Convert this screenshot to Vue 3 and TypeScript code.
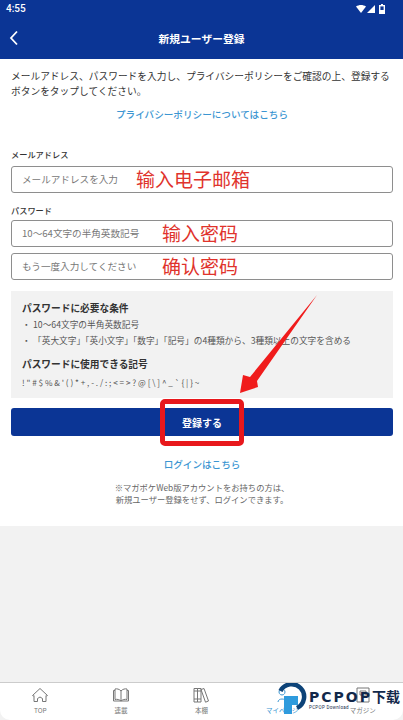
<script setup lang="ts">
interface Tab {
  label: string;
  active?: boolean;
}

const tabs: Tab[] = [
  { label: 'TOP' },
  { label: '連載' },
  { label: '本棚' },
  { label: 'マイページ', active: true },
  { label: 'マガジン' },
];

const fields = [
  { placeholder: '10〜64文字の半角英数記号', note: '输入密码' },
  { placeholder: 'もう一度入力してください', note: '确认密码' },
];
</script>

<template>
  <div class="phone">
    <header class="head">
      <div class="status">
        <span>4:55</span>
        <span class="status-icons">
          <svg width="10" height="8" viewBox="0 0 10 8"><path d="M0 1.500C3 -.5 7 -.5 10 1.500L5 8Z" fill="#fff" /></svg>
          <svg width="8" height="8" viewBox="0 0 8 8"><path d="M8 0V8H0Z" fill="#fff" /></svg>
          <svg class="battery" width="6" height="10" viewBox="0 0 6 10"><path d="M2 0H4V1H6V10H0V1H2Z" fill="#fff" /><rect x="1.400" y="2.400" width="3.200" height="3.600" fill="#0b3595" /></svg>
        </span>
      </div>
      <div class="nav">
        <svg class="back" width="10" height="16" viewBox="0 0 10 16"><path d="M8 1.500 2 8l6 6.500" fill="none" stroke="#fff" stroke-width="1.800" /></svg>
        <span class="title">新規ユーザー登録</span>
      </div>
    </header>

    <main class="form">
      <p class="intro">メールアドレス、パスワードを入力し、プライバシーポリシーをご確認の上、登録するボタンをタップしてください。</p>
      <a class="link policy">プライバシーポリシーについてはこちら</a>

      <label class="label">メールアドレス</label>
      <div class="field email">
        <span class="placeholder first">メールアドレスを入力</span>
        <span class="note">输入电子邮箱</span>
      </div>

      <label class="label second">パスワード</label>
      <div class="stack">
        <div v-for="f in fields" :key="f.note" class="field">
          <span class="placeholder wide">{{ f.placeholder }}</span>
          <span class="note">{{ f.note }}</span>
        </div>
      </div>

      <section class="rules">
        <h3>パスワードに必要な条件</h3>
        <ul>
          <li>10〜64文字の半角英数記号</li>
          <li>「英大文字」「英小文字」「数字」「記号」の4種類から、3種類以上の文字を含める</li>
        </ul>
        <h3 class="symbols-title">パスワードに使用できる記号</h3>
        <p class="symbols">! " # $ % &amp; ' ( ) * + , - . / : ; &lt; = &gt; ? @ [ \ ] ^ _ ` { | } ~</p>
      </section>

      <div class="submit-wrap">
        <button class="submit">登録する</button>
        <span class="mark"></span>
        <svg class="arrow" width="90" height="110" viewBox="0 0 90 110"><path d="M82 5 22 91l1 6L5 103 8 85l7 2Z" fill="#f01c1c" /></svg>
      </div>

      <a class="link login">ログインはこちら</a>
      <p class="notice">※マガポケWeb版アカウントをお持ちの方は、<br />新規ユーザー登録をせず、ログインできます。</p>
    </main>

    <div class="blank"></div>

    <nav class="tabs">
      <div v-for="(t, i) in tabs" :key="t.label" class="tab" :class="{ active: t.active }">
        <svg width="18" height="18" viewBox="0 0 18 18" fill="none" stroke="currentColor" stroke-width="1">
          <path v-if="i === 0" d="M1.500 9.500 9 2.500l7.500 7c-.5.5-1 .5-1.500 0v6h-3.500v-3q-2.500-3-5 0v3H3v-6c-.5.5-1 .5-1.500 0Z" />
          <path v-else-if="i === 1" d="M9 5C7.500 3 4.500 2.500 3 3v10.500c2 -.5 4.500 0 6 1.500 1.500-1.500 4-2 6-1.500V3C13.500 2.500 10.500 3 9 5Zm0 0v10M3 4.500H1.500V15h15V4.500H15" />
          <path v-else-if="i === 2" d="M2 2.500h3.500V16H2zM5.500 2.500H9V16H5.500zM9 3.500l3-1 4.500 12.500-3 1.200zM2 5h7M2 13h7" />
          <path v-else-if="i === 3" d="M5 16c0-4 8-4 8 0M9 3a3 3 0 1 0 .01 0" />
          <path v-else d="M3 2h12v14H3zM6 5h6v4H6z" />
        </svg>
        <span class="tab-label">{{ t.label }}</span>
      </div>
    </nav>

    <div class="watermark">
      <svg width="32" height="34" viewBox="0 0 32 34">
        <path d="M5.500 8A12.500 12.500 0 1 1 22 25" fill="none" stroke="#0d4378" stroke-width="4.500" />
        <rect x="9" y="13" width="14" height="9" fill="#2f9bdd" />
        <rect x="9" y="21" width="8" height="10" fill="#2f9bdd" />
      </svg>
      <div class="wm-text">
        <div class="wm-main"><span class="wm-latin">PCPOP</span>下载</div>
        <div class="wm-sub">PCPOP Download</div>
      </div>
    </div>
  </div>
</template>

<style scoped>
.phone {
  position: relative;
  width: 403px;
  height: 720px;
  overflow: hidden;
  display: flex;
  flex-direction: column;
  background: #f2f2f2;
  color: #333;
  font-family: "Noto Sans CJK JP", "Noto Sans", sans-serif;
}
.head {
  height: 59px;
  flex: none;
  background: #0b3595;
  color: #fff;
}
.status {
  height: 17px;
  padding: 0 18px 0 6px;
  display: flex;
  align-items: center;
  justify-content: space-between;
  font: 500 10px Roboto, sans-serif;
}
.status-icons {
  display: flex;
  align-items: center;
  gap: 1px;
}
.battery {
  margin-left: 3px;
}
.nav {
  position: relative;
  height: 42px;
  display: flex;
  align-items: center;
  justify-content: center;
}
.back {
  position: absolute;
  left: 9px;
  top: 13px;
}
.title {
  font-size: 10.75px;
  font-weight: 700;
}
.form {
  flex: none;
  height: 467px;
  box-sizing: border-box;
  padding: 10px 10px 0 11px;
  background: #fff;
  display: flex;
  flex-direction: column;
}
.intro {
  margin: 0;
  font-size: 9.72px;
  line-height: 15px;
}
.link {
  display: block;
  text-align: center;
  color: #3c96d2;
  font-weight: 500;
}
.policy {
  margin-top: 8px;
  font-size: 9.6px;
  line-height: 14px;
}
.label {
  margin-top: 27px;
  font-size: 8.2px;
  line-height: 12px;
  font-weight: 500;
}
.label.second {
  margin-top: 11px;
}
.field {
  height: 27px;
  box-sizing: border-box;
  border: 1px solid #8e8e8e;
  border-radius: 3px;
  display: flex;
  align-items: center;
  padding-left: 10px;
}
.field.email {
  margin-top: 6px;
}
.stack {
  margin-top: 4px;
  display: flex;
  flex-direction: column;
  gap: 6px;
}
.placeholder {
  margin-bottom: 1px;
  font-size: 9.6px;
  color: #777;
}
.placeholder.first {
  width: 114px;
}
.placeholder.wide {
  width: 140px;
}
.note {
  margin-bottom: 3px;
  font-family: "Noto Sans CJK SC", sans-serif;
  font-size: 19px;
  color: #e0332c;
}
.rules {
  margin-top: 11px;
  height: 107px;
  box-sizing: border-box;
  padding: 10px 11px;
  background: #f2f2f2;
}
.rules h3 {
  margin: 0;
  font-size: 9.7px;
  line-height: 14px;
  font-weight: 700;
}
.rules ul {
  list-style: none;
  margin: 2px 0 0;
  padding: 0;
  font-size: 8.7px;
  line-height: 16px;
  color: #555;
}
.rules li::before {
  content: "・";
  display: inline-block;
  width: 11px;
}
.rules .symbols-title {
  margin-top: 8px;
}
.symbols {
  margin: 5px 0 0;
  font-size: 8.2px;
  line-height: 12px;
  color: #555;
}
.submit-wrap {
  position: relative;
  margin-top: 10px;
}
.submit {
  display: block;
  width: 100%;
  height: 28px;
  border: 0;
  border-radius: 3px;
  background: #0b3595;
  color: #fff;
  font: 700 10px "Noto Sans CJK JP", sans-serif;
}
.mark {
  position: absolute;
  left: 149px;
  top: -9px;
  width: 84px;
  height: 47px;
  box-sizing: border-box;
  border: 5.5px solid #e8181c;
  border-radius: 5px;
}
.arrow {
  position: absolute;
  left: 224px;
  top: -118px;
}
.login {
  margin-top: 21px;
  font-size: 9.6px;
  line-height: 14px;
}
.notice {
  margin: 10px 0 0;
  text-align: center;
  font-size: 8.3px;
  line-height: 12px;
  color: #666;
}
.blank {
  flex: 1;
}
.tabs {
  height: 38px;
  flex: none;
  display: flex;
  background: #fff;
  border-top: 1px solid #ccc;
  border-radius: 0 0 10px 10px;
  box-sizing: border-box;
}
.tab {
  flex: 1;
  display: flex;
  flex-direction: column;
  align-items: center;
  padding-top: 3px;
  color: #777;
  font-size: 6.5px;
  line-height: 9px;
}
.tab-label {
  margin-top: 2px;
}
.tab.active {
  color: #3c96d2;
}
.watermark {
  position: absolute;
  left: 275px;
  top: 683px;
  display: flex;
  gap: 2px;
  color: #12284a;
}
.wm-main {
  margin-top: 6px;
  font: 700 14px "Noto Sans CJK SC", sans-serif;
  line-height: 15px;
  white-space: nowrap;
}
.wm-latin {
  font-family: "DejaVu Sans", sans-serif;
  letter-spacing: 2px;
  font-size: 14px;
}
.wm-sub {
  font: 4.500px Roboto, sans-serif;
  letter-spacing: .3px;
}
</style>
<style>
html, body {
  margin: 0;
}
</style>
